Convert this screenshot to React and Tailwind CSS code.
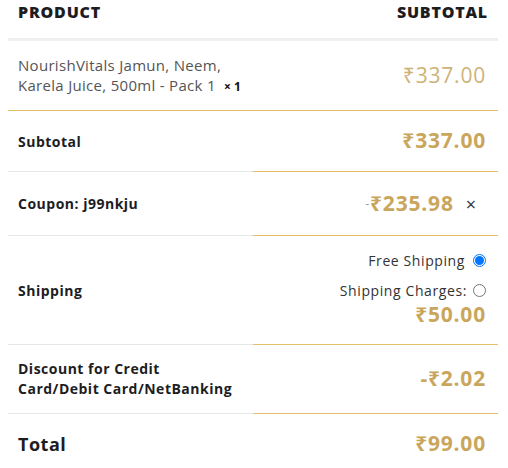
import React, {useState} from 'react';

const font = {fontFamily: '"Open Sans", "Noto Sans", sans-serif'}

const Radio = ({checked, onClick}) => (
	<span onClick={onClick}
	      className={"inline-flex h-[13px] w-[13px] shrink-0 items-center justify-center rounded-full border " + (checked ? "border-[#0075ff]" : "border-[#767676]")}>
		{checked ? <span className="h-[9px] w-[9px] rounded-full bg-[#0075ff]"></span> : null}
	</span>
)

const App = () => {

	const [ship, setShip] = useState('free')

	return (
		<div className="w-[508px] h-[468px] overflow-hidden bg-white text-[#1d1d1f]" style={font}>
			<div className="ml-2 w-[490px]">

				{/* header */}
				<div className="grid grid-cols-2 h-[41px] border-b-[3px] border-[#efefef]">
					<div className="pl-[10px] text-[16px] font-extrabold tracking-[0.8px]">PRODUCT</div>
					<div className="pr-[10px] text-right text-[16px] font-extrabold tracking-[0.8px]">SUBTOTAL</div>
				</div>

				{/* product */}
				<div className="grid grid-cols-2 h-[70px] border-b border-[#e5c06a]">
					<div className="pl-[10px] flex items-center text-[15px] leading-[20px] tracking-[0.3px] text-[#555]">
						<div>NourishVitals Jamun, Neem,<br/>Karela Juice, 500ml - Pack 1 <b className="ml-1 text-[12px] tracking-normal text-[#111]">× 1</b></div>
					</div>
					<div className="pr-[12px] flex items-center justify-end text-[21px] tracking-[0.8px] text-[#cfb277]">₹337.00</div>
				</div>

				{/* subtotal */}
				<div className="grid grid-cols-2 h-[61px]">
					<div className="pl-[10px] flex items-center border-b border-[#e6e6e6] text-[14px] font-bold tracking-[0.5px]">Subtotal</div>
					<div className="pr-[12px] flex items-center justify-end border-b border-[#e5c06a] text-[21px] font-bold tracking-[0.8px] text-[#c9a65c]">₹337.00</div>
				</div>

				{/* coupon */}
				<div className="grid grid-cols-2 h-[64px]">
					<div className="pl-[10px] flex items-center border-b border-[#e6e6e6] text-[14px] font-bold tracking-[0.5px]">Coupon: j99nkju</div>
					<div className="pr-[22px] flex items-center justify-end border-b border-[#e5c06a]">
						<span className="mr-[1px] text-[11px] text-[#888]">-</span>
						<span className="text-[21px] font-bold tracking-[0.8px] text-[#c9a65c]">₹235.98</span>
						<span className="ml-[12px] text-[18px] leading-none text-[#333]">×</span>
					</div>
				</div>

				{/* shipping */}
				<div className="grid grid-cols-2 h-[109px]">
					<div className="pl-[10px] flex items-center border-b border-[#e6e6e6] text-[14px] font-bold tracking-[0.5px]">Shipping</div>
					<div className="pr-[12px] pt-[14px] flex flex-col items-end border-b border-[#e5c06a] text-[14px] tracking-[0.6px] text-[#333]">
						<div className="flex items-center gap-[8px] h-[20px]" onClick={() => setShip('free')}>
							<span>Free Shipping</span>
							<Radio checked={ship === 'free'}/>
						</div>
						<div className="mt-[10px] flex items-center gap-[6px] h-[20px]" onClick={() => setShip('charge')}>
							<span>Shipping Charges:</span>
							<Radio checked={ship === 'charge'}/>
						</div>
						<div className="text-[21px] font-bold leading-[28px] tracking-[0.8px] text-[#c9a65c]">₹50.00</div>
					</div>
				</div>

				{/* discount */}
				<div className="grid grid-cols-2 h-[69px]">
					<div className="pl-[10px] flex items-center border-b border-[#e6e6e6] text-[14px] font-bold leading-[20px] tracking-[0.5px]">
						<div>Discount for Credit<br/>Card/Debit Card/NetBanking</div>
					</div>
					<div className="pr-[12px] flex items-center justify-end border-b border-[#e5c06a] text-[21px] font-bold tracking-[0.8px] text-[#c9a65c]">-₹2.02</div>
				</div>

				{/* total */}
				<div className="grid grid-cols-2 h-[60px]">
					<div className="pl-[10px] flex items-center text-[18px] font-bold tracking-[0.5px]">Total</div>
					<div className="pr-[12px] flex items-center justify-end text-[21px] font-bold tracking-[0.8px] text-[#c9a65c]">₹99.00</div>
				</div>

			</div>
		</div>
	);
};

export default App;
